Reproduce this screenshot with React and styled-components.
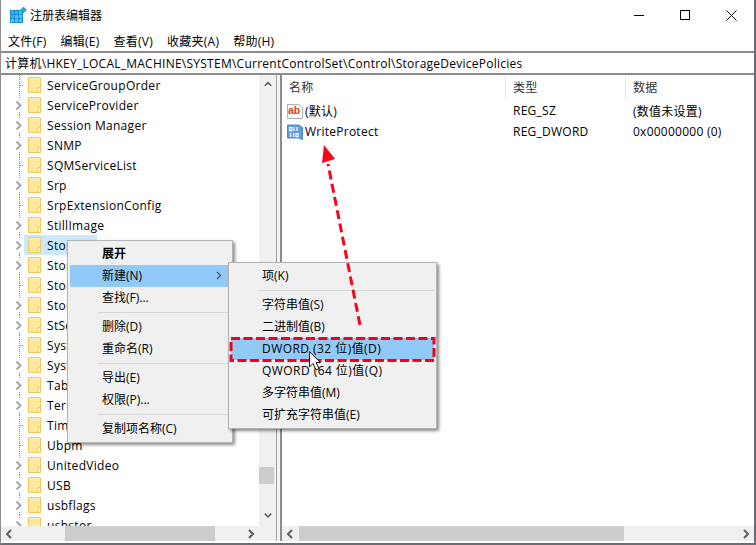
import styled, { createGlobalStyle } from "styled-components"

const GlobalStyle = createGlobalStyle`
    html, body {
        margin: 0;
        padding: 0;
        background: #fff;
    }
    body {
        font-family: "Open Sans", "Noto Sans CJK SC", sans-serif;
        font-size: 12px;
        letter-spacing: 0.25px;
        color: #000;
    }
`

const Page = styled.div`
    position: relative;
    width: 756px;
    height: 545px;
    overflow: hidden;
    background: #fff;
`

const Window = styled.div`
    box-sizing: border-box;
    height: 100%;
    display: flex;
    flex-direction: column;
    border-left: 1px solid #8f8f8f;
    border-right: 2px solid #6d6d76;
    border-bottom: 2px solid #6d6d76;
`

const TitleBar = styled.div`
    height: 30px;
    flex: none;
    display: flex;
    align-items: center;
    padding-left: 8px;
`

const TitleText = styled.span`
    margin-left: 3px;
    letter-spacing: 0;
    white-space: nowrap;
`

const WindowButtons = styled.div`
    margin-left: auto;
    display: flex;
`

const WindowButton = styled.div`
    width: 46px;
    height: 30px;
    display: flex;
    align-items: center;
    justify-content: center;
`

const MenuBar = styled.div`
    height: 21px;
    flex: none;
    display: flex;
    align-items: center;
    gap: 14px;
    padding-left: 7px;
    box-sizing: border-box;
    white-space: nowrap;
`

const AddressBar = styled.div`
    height: 24px;
    flex: none;
    box-sizing: border-box;
    display: flex;
    align-items: center;
    padding-left: 4px;
    border-top: 2px solid #8c8c8c;
    border-bottom: 2px solid #8c8c8c;
    white-space: nowrap;
`

const Panes = styled.div`
    flex: 1;
    min-height: 0;
    display: flex;
    padding-bottom: 2px;
`

const TreePane = styled.div`
    width: 275px;
    flex: none;
    display: grid;
    grid-template-columns: 1fr 17px;
    grid-template-rows: 1fr 15px;
`

const TreeList = styled.div`
    overflow: hidden;
    min-height: 0;
`

const TreeRow = styled.div`
    height: 20px;
    display: flex;
    padding-left: 13px;
`

const TreeItem = styled.div`
    display: flex;
    align-items: center;
    gap: 6px;
    padding: 0 5px 0 4px;
    letter-spacing: 0.3px;
    background: ${(p) => (p.$selected ? "#cce8ff" : "transparent")};
    white-space: nowrap;
`

const VScroll = styled.div`
    background: #f0f0f0;
    display: flex;
    flex-direction: column;
`

const VArrow = styled.div`
    height: 20px;
    flex: none;
    display: flex;
    align-items: center;
    justify-content: center;
`

const VTrack = styled.div`
    flex: 1;
    padding-top: ${(p) => p.$start}px;
`

const VThumb = styled.div`
    width: 15px;
    height: ${(p) => p.$size}px;
    background: #cdcdcd;
`

const HScroll = styled.div`
    background: #f0f0f0;
    display: flex;
    align-items: stretch;
    min-width: 0;
    height: 15px;
`

const HArrow = styled.div`
    width: 17px;
    flex: none;
    display: flex;
    align-items: center;
    justify-content: center;
`

const HTrack = styled.div`
    flex: 1;
    padding-left: ${(p) => p.$start}px;
`

const HThumb = styled.div`
    width: ${(p) => p.$size}px;
    height: 100%;
    background: #cdcdcd;
`

const Corner = styled.div`
    background: #f0f0f0;
`

const Splitter = styled.div`
    width: 3px;
    flex: none;
    background: #f4f4f4;
    border-left: 1px solid #a0a0a0;
    border-right: 2px solid #8c8c8c;
`

const ValuePane = styled.div`
    flex: 1;
    min-width: 0;
    display: flex;
    flex-direction: column;
`

const ValueBody = styled.div`
    flex: 1;
`

const ValueHeader = styled.div`
    height: 25px;
    display: grid;
    grid-template-columns: 224px 120px 1fr;
    color: #333;
`

const HeaderCell = styled.div`
    height: 24px;
    display: flex;
    align-items: center;
    padding-left: 7px;
    box-sizing: border-box;
    border-right: ${(p) => (p.$last ? "none" : "1px solid #e5e5e5")};
`

const ValueRow = styled.div`
    height: 21px;
    display: grid;
    grid-template-columns: 224px 120px 1fr;
    align-items: center;
    white-space: nowrap;
`

const NameCell = styled.div`
    display: flex;
    align-items: center;
    gap: 2px;
    padding-left: 5px;
`

const ValueCell = styled.div`
    padding-left: 7px;
`

const ContextMenu = styled.div`
    position: absolute;
    left: ${(p) => p.$left}px;
    top: ${(p) => p.$top}px;
    width: ${(p) => p.$width}px;
    box-sizing: border-box;
    padding: 2px;
    background: #f0f0f0;
    border: 1px solid #b4b4b4;
    box-shadow: 2px 2px 3px rgba(0, 0, 0, 0.45);
`

const MenuItem = styled.div`
    height: 22px;
    box-sizing: border-box;
    display: flex;
    align-items: center;
    padding: 0 8px 2px ${(p) => p.$indent}px;
    font-weight: ${(p) => (p.$bold ? 700 : 400)};
    letter-spacing: ${(p) => (p.$latin ? "0.45px" : "0")};
    background: ${(p) => (p.$active ? "#91c9f7" : "transparent")};
    white-space: nowrap;
`

const MenuSeparator = styled.div`
    height: 1px;
    margin: 3px 0 3px 28px;
    background: #d7d7d7;
`

const Annotation = styled.svg`
    position: absolute;
    left: 0;
    top: 0;
    pointer-events: none;
`

const rows = [
    ["ServiceGroupOrder", "leaf"],
    ["ServiceProvider", "node"],
    ["Session Manager", "node"],
    ["SNMP", "node"],
    ["SQMServiceList", "leaf"],
    ["Srp", "node"],
    ["SrpExtensionConfig", "leaf"],
    ["StillImage", "node"],
    ["Storage", "node", true],
    ["StorageManagement", "node"],
    ["StorPort", "leaf"],
    ["StorVSP", "node"],
    ["StSec", "node"],
    ["SystemInformation", "leaf"],
    ["SystemResources", "node"],
    ["TabletPC", "node"],
    ["Terminal Server", "node"],
    ["TimeZoneInformation", "leaf"],
    ["Ubpm", "leaf"],
    ["UnitedVideo", "node"],
    ["USB", "node"],
    ["usbflags", "node"],
    ["usbstor", "node"],
]

const RegistryLogo = () => (
    <svg width="18" height="18" viewBox="0 0 18 18">
        <rect x="1" y="4" width="13" height="13" fill="#0f7fc4" />
        {[0, 1, 2].map((r) =>
            [0, 1, 2].map((c) => (
                <rect key={`${r}${c}`} x={1.7 + c * 4.1} y={4.7 + r * 4.1} width="3.4" height="3.4" fill={r + c < 2 ? "#2db4ee" : "#45c8f5"} />
            ))
        )}
        <path d="M14.5 1 L17.5 4 L14.5 7 L11.5 4 Z" fill="#2f9fdc" stroke="#0f7fc4" strokeWidth="0.6" />
    </svg>
)

const Folder = () => (
    <svg width="13" height="16" viewBox="0 0 13 16" style={{ flex: "none" }}>
        <path d="M0.5 0.5 H12.5 V15.5 H0.5 Z" fill="#ffe79c" stroke="#ecc85f" />
        <path d="M1 1 H12 V2 H1 Z" fill="#fff0bd" />
        <path d="M10 10.5 H12.5 V15.5 H10 Z" fill="#fff4cf" stroke="#ecc85f" />
    </svg>
)

const TreeToggle = ({ kind }) => (
    <svg width="10" height="20" viewBox="0 0 10 20" style={{ flex: "none" }}>
        {kind === "leaf" ? (
            <>
                <path d="M5.5 0 V20" stroke="#8a8a8a" strokeDasharray="1 1" fill="none" />
                <path d="M6 10.5 H11" stroke="#8a8a8a" strokeDasharray="1 1" fill="none" />
            </>
        ) : (
            <>
                <path d="M5.5 0 V3" stroke="#8a8a8a" strokeDasharray="1 1" fill="none" />
                <path d="M5.5 17 V20" stroke="#8a8a8a" strokeDasharray="1 1" fill="none" />
                <path d="M2.5 6.5 L6.5 10.5 L2.5 14.5" stroke="#a6a6a6" strokeWidth="2" fill="none" />
            </>
        )}
    </svg>
)

const Chevron = ({ dir }) => {
    const d = {
        up: "M1 6 L5 2 L9 6",
        down: "M1 2 L5 6 L9 2",
        left: "M6 1 L2 5 L6 9",
        right: "M3 1 L7 5 L3 9",
    }[dir]
    return (
        <svg width="10" height="10" viewBox="0 0 10 10" style={dir === "up" || dir === "down" ? { height: 8 } : undefined}>
            <path d={d} stroke="#606060" strokeWidth="2" fill="none" />
        </svg>
    )
}

const StringIcon = () => (
    <svg width="16" height="16" viewBox="0 0 16 16" style={{ flex: "none" }}>
        <path d="M0.5 1.5 H11.5 L15.5 4.5 V15.5 H0.5 Z" fill="#fff" stroke="#b0b0b0" />
        <text x="1" y="11" fontFamily="Liberation Sans" fontWeight="700" fontSize="10.5" letterSpacing="0" fill="#d8401c">ab</text>
    </svg>
)

const BinaryIcon = () => (
    <svg width="16" height="16" viewBox="0 0 16 16" style={{ flex: "none" }}>
        <path d="M0.5 1 H12 L15.5 3.5 V15.5 L11 14 H0.5 Z" fill="#5f9fdc" stroke="#3b78b8" strokeWidth="0.8" />
        <g fill="none" stroke="#fff" strokeWidth="1.2">
            <rect x="2.6" y="3.6" width="2.2" height="3" />
            <path d="M7 3 V7 M10 3 V7" />
            <path d="M3.7 9 V13 M6.7 9 V13" />
            <rect x="9" y="9.6" width="2.2" height="3" />
        </g>
    </svg>
)

const App = () => {
    return (
        <Page>
            <GlobalStyle />
            <Window>
                <TitleBar>
                    <RegistryLogo />
                    <TitleText>注册表编辑器</TitleText>
                    <WindowButtons>
                        <WindowButton>
                            <svg width="11" height="11" viewBox="0 0 11 11"><path d="M0 5.5 H10" stroke="#000" /></svg>
                        </WindowButton>
                        <WindowButton>
                            <svg width="11" height="11" viewBox="0 0 11 11"><rect x="0.5" y="0.5" width="9" height="9" fill="none" stroke="#000" /></svg>
                        </WindowButton>
                        <WindowButton>
                            <svg width="11" height="11" viewBox="0 0 11 11"><path d="M0.5 0.5 L10.5 10.5 M10.5 0.5 L0.5 10.5" stroke="#000" fill="none" /></svg>
                        </WindowButton>
                    </WindowButtons>
                </TitleBar>
                <MenuBar>
                    <span>文件(F)</span>
                    <span>编辑(E)</span>
                    <span>查看(V)</span>
                    <span>收藏夹(A)</span>
                    <span>帮助(H)</span>
                </MenuBar>
                <AddressBar>计算机\HKEY_LOCAL_MACHINE\SYSTEM\CurrentControlSet\Control\StorageDevicePolicies</AddressBar>
                <Panes>
                    <TreePane>
                        <TreeList>
                            {rows.map(([name, kind, selected]) => (
                                <TreeRow key={name}>
                                    <TreeToggle kind={kind} />
                                    <TreeItem $selected={selected}>
                                        <Folder />
                                        {name}
                                    </TreeItem>
                                </TreeRow>
                            ))}
                        </TreeList>
                        <VScroll>
                            <VArrow><Chevron dir="up" /></VArrow>
                            <VTrack $start={372}><VThumb $size={17} /></VTrack>
                            <VArrow><Chevron dir="down" /></VArrow>
                        </VScroll>
                        <HScroll>
                            <HArrow><Chevron dir="left" /></HArrow>
                            <HTrack $start={47}><HThumb $size={150} /></HTrack>
                            <HArrow><Chevron dir="right" /></HArrow>
                        </HScroll>
                        <Corner />
                    </TreePane>
                    <Splitter />
                    <ValuePane>
                        <ValueBody>
                            <ValueHeader>
                                <HeaderCell>名称</HeaderCell>
                                <HeaderCell>类型</HeaderCell>
                                <HeaderCell $last>数据</HeaderCell>
                            </ValueHeader>
                            <ValueRow>
                                <NameCell><StringIcon />(默认)</NameCell>
                                <ValueCell>REG_SZ</ValueCell>
                                <ValueCell>(数值未设置)</ValueCell>
                            </ValueRow>
                            <ValueRow>
                                <NameCell><BinaryIcon />WriteProtect</NameCell>
                                <ValueCell>REG_DWORD</ValueCell>
                                <ValueCell>0x00000000 (0)</ValueCell>
                            </ValueRow>
                        </ValueBody>
                        <HScroll>
                            <HArrow><Chevron dir="left" /></HArrow>
                            <HTrack $start={0}><HThumb $size={325} /></HTrack>
                            <HArrow><Chevron dir="right" /></HArrow>
                        </HScroll>
                    </ValuePane>
                </Panes>
            </Window>

            <ContextMenu $left={67} $top={240} $width={166}>
                <MenuItem $indent={32} $bold>展开</MenuItem>
                <MenuItem $indent={32} $active>新建(N)</MenuItem>
                <MenuItem $indent={32}>查找(F)...</MenuItem>
                <MenuSeparator />
                <MenuItem $indent={32}>删除(D)</MenuItem>
                <MenuItem $indent={32}>重命名(R)</MenuItem>
                <MenuSeparator />
                <MenuItem $indent={32}>导出(E)</MenuItem>
                <MenuItem $indent={32}>权限(P)...</MenuItem>
                <MenuSeparator />
                <MenuItem $indent={32}>复制项名称(C)</MenuItem>
            </ContextMenu>

            <ContextMenu $left={228} $top={262} $width={209}>
                <MenuItem $indent={31}>项(K)</MenuItem>
                <MenuSeparator />
                <MenuItem $indent={31}>字符串值(S)</MenuItem>
                <MenuItem $indent={31}>二进制值(B)</MenuItem>
                <MenuItem $indent={31} $active $latin>DWORD (32 位)值(D)</MenuItem>
                <MenuItem $indent={31} $latin>QWORD (64 位)值(Q)</MenuItem>
                <MenuItem $indent={31}>多字符串值(M)</MenuItem>
                <MenuItem $indent={31}>可扩充字符串值(E)</MenuItem>
            </ContextMenu>

            <Annotation width="756" height="545" viewBox="0 0 756 545">
                <path d="M217 272 L220.5 275.5 L217 279" stroke="#505050" strokeWidth="1.2" fill="none" />
                <rect x="231" y="338.5" width="203" height="22" fill="none" stroke="#f4001c" strokeWidth="3" strokeDasharray="9 3.5" />
                <path d="M360 325 L328 164" fill="none" stroke="#ff0018" strokeWidth="3" strokeDasharray="9 4.5" />
                <path d="M324 145 L322 163 L335 159 Z" fill="#ff0018" />
                <path d="M309.5 351.5 V367 L313 363.5 L316 370 L319 368.5 L316 362.5 L320.5 362.5 Z" fill="#fff" stroke="#000" strokeWidth="0.9" />
            </Annotation>
        </Page>
    )
}

export default App
